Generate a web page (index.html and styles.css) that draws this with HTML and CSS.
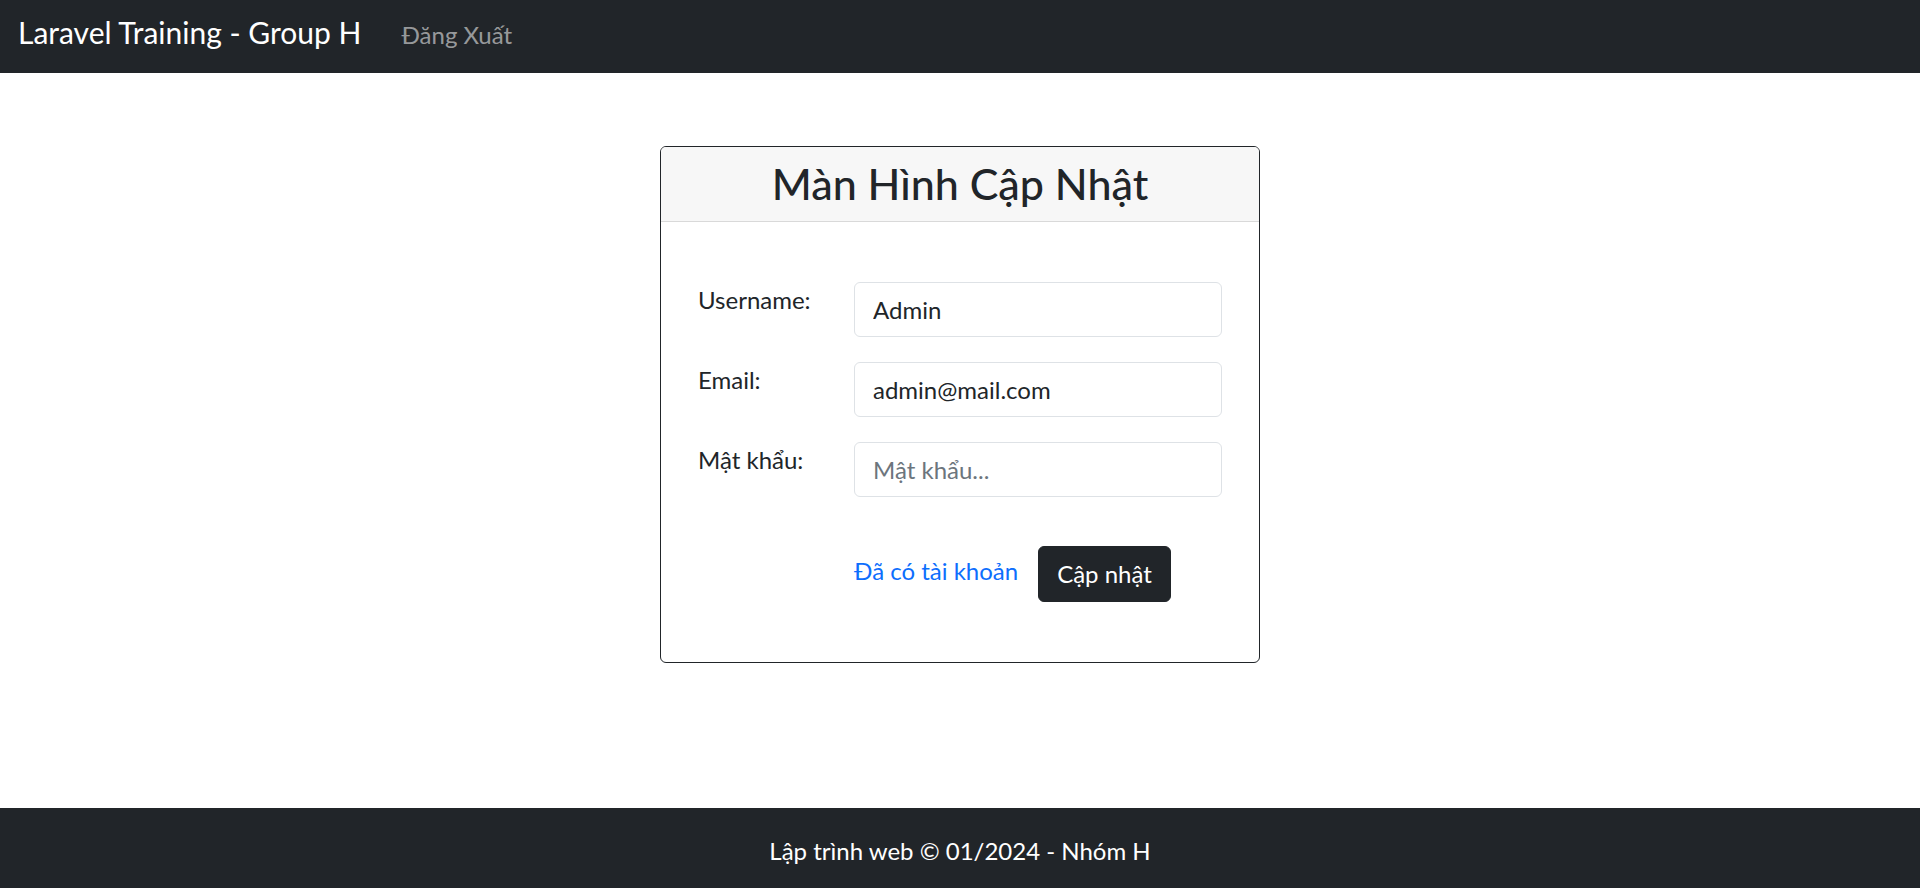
FILE: index.html
```html
<!DOCTYPE html>
<html lang="vi">
<head>
<meta charset="utf-8">
<title>Màn Hình Cập Nhật</title>
<link rel="stylesheet" href="styles.css">
</head>
<body>
<div class="page">
  <nav class="navbar">
    <a class="brand" href="#">Laravel Training - Group H</a>
    <a class="nav-link" href="#">Đăng Xuất</a>
  </nav>
  <main class="main">
    <div class="card">
      <div class="card-header">
        <h3 class="card-title">Màn Hình Cập Nhật</h3>
      </div>
      <div class="card-body">
        <form class="form">
          <div class="form-row">
            <label class="form-label" for="username">Username:</label>
            <input class="form-control" id="username" type="text" value="Admin">
          </div>
          <div class="form-row">
            <label class="form-label" for="email">Email:</label>
            <input class="form-control" id="email" type="email" value="admin@mail.com">
          </div>
          <div class="form-row">
            <label class="form-label" for="password">Mật khẩu:</label>
            <input class="form-control" id="password" type="password" placeholder="Mật khẩu...">
          </div>
          <div class="form-actions">
            <a class="link" href="#">Đã có tài khoản</a>
            <button class="btn" type="button">Cập nhật</button>
          </div>
        </form>
      </div>
    </div>
  </main>
  <footer class="footer">Lập trình web © 01/2024 - Nhóm H</footer>
</div>
</body>
</html>
```
FILE: styles.css
```css
* { box-sizing: border-box; }
html, body { margin: 0; padding: 0; }
body {
  font-family: "Lato", "Noto Sans", sans-serif;
  font-size: 24px;
  line-height: 1.5;
  color: #212529;
  background: #fff;
  overflow: hidden;
}
.page {
  display: flex;
  flex-direction: column;
  height: 888px;
}
.navbar {
  height: 73px;
  background: #212529;
  display: flex;
  align-items: baseline;
  padding: 14px 18px 0;
  flex: none;
}
.brand {
  font-size: 30px;
  line-height: 36px;
  color: #fff;
  text-decoration: none;
  margin-right: 28px;
}
.nav-link {
  font-size: 24px;
  line-height: 36px;
  color: rgba(255, 255, 255, 0.55);
  text-decoration: none;
  padding: 0 12px;
}
.main {
  flex: 1;
  display: flex;
  justify-content: center;
  align-items: flex-start;
  padding-top: 73px;
}
.card {
  width: 600px;
  border: 1px solid #212529;
  border-radius: 6px;
  background: #fff;
  overflow: hidden;
}
.card-header {
  background: #f7f7f7;
  border-bottom: 1px solid #d9d9d9;
  padding: 12px 0;
  text-align: center;
}
.card-title {
  margin: 0;
  font-size: 43px;
  line-height: 50px;
  font-weight: 500;
}
.card-body {
  padding: 60px 37px 60px 37px;
}
.form {
  display: flex;
  flex-direction: column;
  gap: 25px;
}
.form-row {
  display: grid;
  grid-template-columns: 156px 1fr;
  align-items: start;
}
.form-label {
  line-height: 36px;
  margin-top: 0;
}
.form-control {
  font-family: inherit;
  font-size: 24px;
  line-height: 36px;
  height: 55px;
  padding: 8px 18px;
  border: 1px solid #dee2e6;
  border-radius: 6px;
  color: #212529;
  background: #fff;
  width: 100%;
}
.form-control::placeholder { color: #6c757d; }
.form-actions {
  display: flex;
  align-items: flex-start;
  margin-top: 24px;
  padding-left: 156px;
}
.link {
  color: #0d6efd;
  text-decoration: none;
  margin-top: 7px;
  margin-right: 20px;
}
.btn {
  font-family: inherit;
  font-size: 24px;
  line-height: 36px;
  height: 56px;
  padding: 9px 18px;
  border: 1px solid #212529;
  border-radius: 6px;
  background: #212529;
  color: #fff;
}
.footer {
  flex: none;
  height: 80px;
  background: #212529;
  color: #fff;
  text-align: center;
  padding-top: 25px;
  line-height: 36px;
}
```
